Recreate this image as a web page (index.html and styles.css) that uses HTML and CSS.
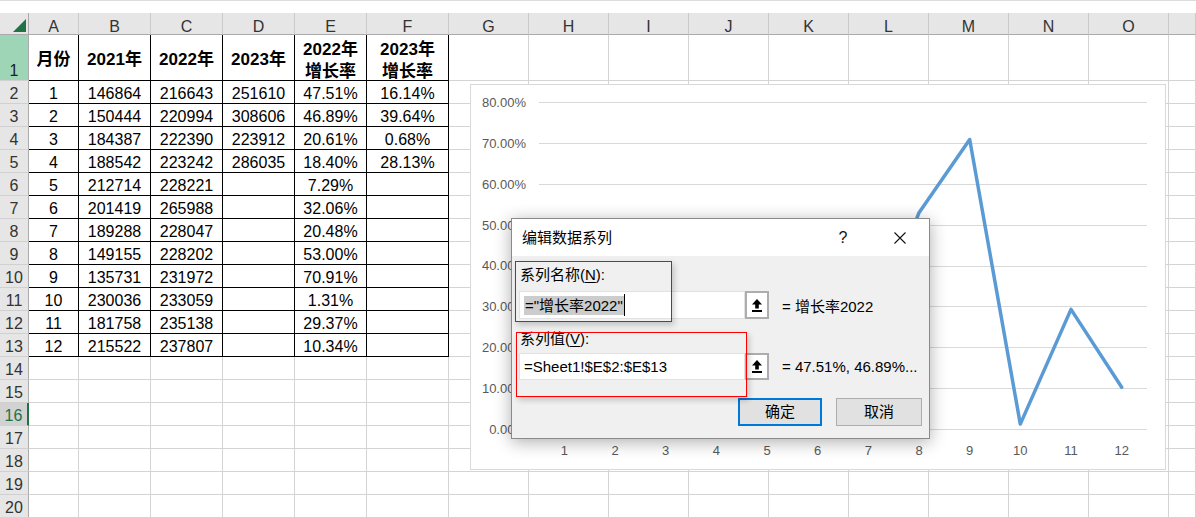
FILE: index.html
```html
<!DOCTYPE html>
<html lang="zh-CN">
<head>
<meta charset="utf-8">
<title>Excel - 编辑数据系列</title>
<link rel="stylesheet" href="styles.css">
</head>
<body>
<div class="page">
  <div class="topbar"></div>
  <div class="grid">
    <div class="corner"><svg width="28" height="21" viewBox="0 0 28 21"><polygon points="26,6 26,19 13,19" fill="#217346"/></svg></div>
    <div class="ch">A</div><div class="ch">B</div><div class="ch">C</div><div class="ch">D</div><div class="ch">E</div><div class="ch">F</div><div class="ch">G</div><div class="ch">H</div><div class="ch">I</div><div class="ch">J</div><div class="ch">K</div><div class="ch">L</div><div class="ch">M</div><div class="ch">N</div><div class="ch">O</div><div class="ch"></div>

    <div class="rh sel">1</div><div class="c b h">月份</div><div class="c b h">2021年</div><div class="c b h">2022年</div><div class="c b h">2023年</div><div class="c b h h2">2022年<br>增长率</div><div class="c b h h2">2023年<br>增长率</div><div class="c"></div><div class="c"></div><div class="c"></div><div class="c"></div><div class="c"></div><div class="c"></div><div class="c"></div><div class="c"></div><div class="c"></div><div class="c"></div>

    <div class="rh">2</div><div class="c b">1</div><div class="c b">146864</div><div class="c b">216643</div><div class="c b">251610</div><div class="c b">47.51%</div><div class="c b">16.14%</div><div class="c"></div><div class="c"></div><div class="c"></div><div class="c"></div><div class="c"></div><div class="c"></div><div class="c"></div><div class="c"></div><div class="c"></div><div class="c"></div>

    <div class="rh">3</div><div class="c b">2</div><div class="c b">150444</div><div class="c b">220994</div><div class="c b">308606</div><div class="c b">46.89%</div><div class="c b">39.64%</div><div class="c"></div><div class="c"></div><div class="c"></div><div class="c"></div><div class="c"></div><div class="c"></div><div class="c"></div><div class="c"></div><div class="c"></div><div class="c"></div>

    <div class="rh">4</div><div class="c b">3</div><div class="c b">184387</div><div class="c b">222390</div><div class="c b">223912</div><div class="c b">20.61%</div><div class="c b">0.68%</div><div class="c"></div><div class="c"></div><div class="c"></div><div class="c"></div><div class="c"></div><div class="c"></div><div class="c"></div><div class="c"></div><div class="c"></div><div class="c"></div>

    <div class="rh">5</div><div class="c b">4</div><div class="c b">188542</div><div class="c b">223242</div><div class="c b">286035</div><div class="c b">18.40%</div><div class="c b">28.13%</div><div class="c"></div><div class="c"></div><div class="c"></div><div class="c"></div><div class="c"></div><div class="c"></div><div class="c"></div><div class="c"></div><div class="c"></div><div class="c"></div>

    <div class="rh">6</div><div class="c b">5</div><div class="c b">212714</div><div class="c b">228221</div><div class="c b"></div><div class="c b">7.29%</div><div class="c b"></div><div class="c"></div><div class="c"></div><div class="c"></div><div class="c"></div><div class="c"></div><div class="c"></div><div class="c"></div><div class="c"></div><div class="c"></div><div class="c"></div>

    <div class="rh">7</div><div class="c b">6</div><div class="c b">201419</div><div class="c b">265988</div><div class="c b"></div><div class="c b">32.06%</div><div class="c b"></div><div class="c"></div><div class="c"></div><div class="c"></div><div class="c"></div><div class="c"></div><div class="c"></div><div class="c"></div><div class="c"></div><div class="c"></div><div class="c"></div>

    <div class="rh">8</div><div class="c b">7</div><div class="c b">189288</div><div class="c b">228047</div><div class="c b"></div><div class="c b">20.48%</div><div class="c b"></div><div class="c"></div><div class="c"></div><div class="c"></div><div class="c"></div><div class="c"></div><div class="c"></div><div class="c"></div><div class="c"></div><div class="c"></div><div class="c"></div>

    <div class="rh">9</div><div class="c b">8</div><div class="c b">149155</div><div class="c b">228202</div><div class="c b"></div><div class="c b">53.00%</div><div class="c b"></div><div class="c"></div><div class="c"></div><div class="c"></div><div class="c"></div><div class="c"></div><div class="c"></div><div class="c"></div><div class="c"></div><div class="c"></div><div class="c"></div>

    <div class="rh">10</div><div class="c b">9</div><div class="c b">135731</div><div class="c b">231972</div><div class="c b"></div><div class="c b">70.91%</div><div class="c b"></div><div class="c"></div><div class="c"></div><div class="c"></div><div class="c"></div><div class="c"></div><div class="c"></div><div class="c"></div><div class="c"></div><div class="c"></div><div class="c"></div>

    <div class="rh">11</div><div class="c b">10</div><div class="c b">230036</div><div class="c b">233059</div><div class="c b"></div><div class="c b">1.31%</div><div class="c b"></div><div class="c"></div><div class="c"></div><div class="c"></div><div class="c"></div><div class="c"></div><div class="c"></div><div class="c"></div><div class="c"></div><div class="c"></div><div class="c"></div>

    <div class="rh">12</div><div class="c b">11</div><div class="c b">181758</div><div class="c b">235138</div><div class="c b"></div><div class="c b">29.37%</div><div class="c b"></div><div class="c"></div><div class="c"></div><div class="c"></div><div class="c"></div><div class="c"></div><div class="c"></div><div class="c"></div><div class="c"></div><div class="c"></div><div class="c"></div>

    <div class="rh">13</div><div class="c b">12</div><div class="c b">215522</div><div class="c b">237807</div><div class="c b"></div><div class="c b">10.34%</div><div class="c b"></div><div class="c"></div><div class="c"></div><div class="c"></div><div class="c"></div><div class="c"></div><div class="c"></div><div class="c"></div><div class="c"></div><div class="c"></div><div class="c"></div>

    <div class="rh">14</div><div class="c"></div><div class="c"></div><div class="c"></div><div class="c"></div><div class="c"></div><div class="c"></div><div class="c"></div><div class="c"></div><div class="c"></div><div class="c"></div><div class="c"></div><div class="c"></div><div class="c"></div><div class="c"></div><div class="c"></div><div class="c"></div>

    <div class="rh">15</div><div class="c"></div><div class="c"></div><div class="c"></div><div class="c"></div><div class="c"></div><div class="c"></div><div class="c"></div><div class="c"></div><div class="c"></div><div class="c"></div><div class="c"></div><div class="c"></div><div class="c"></div><div class="c"></div><div class="c"></div><div class="c"></div>

    <div class="rh act">16</div><div class="c"></div><div class="c"></div><div class="c"></div><div class="c"></div><div class="c"></div><div class="c"></div><div class="c"></div><div class="c"></div><div class="c"></div><div class="c"></div><div class="c"></div><div class="c"></div><div class="c"></div><div class="c"></div><div class="c"></div><div class="c"></div>

    <div class="rh">17</div><div class="c"></div><div class="c"></div><div class="c"></div><div class="c"></div><div class="c"></div><div class="c"></div><div class="c"></div><div class="c"></div><div class="c"></div><div class="c"></div><div class="c"></div><div class="c"></div><div class="c"></div><div class="c"></div><div class="c"></div><div class="c"></div>

    <div class="rh">18</div><div class="c"></div><div class="c"></div><div class="c"></div><div class="c"></div><div class="c"></div><div class="c"></div><div class="c"></div><div class="c"></div><div class="c"></div><div class="c"></div><div class="c"></div><div class="c"></div><div class="c"></div><div class="c"></div><div class="c"></div><div class="c"></div>

    <div class="rh">19</div><div class="c"></div><div class="c"></div><div class="c"></div><div class="c"></div><div class="c"></div><div class="c"></div><div class="c"></div><div class="c"></div><div class="c"></div><div class="c"></div><div class="c"></div><div class="c"></div><div class="c"></div><div class="c"></div><div class="c"></div><div class="c"></div>

    <div class="rh">20</div><div class="c"></div><div class="c"></div><div class="c"></div><div class="c"></div><div class="c"></div><div class="c"></div><div class="c"></div><div class="c"></div><div class="c"></div><div class="c"></div><div class="c"></div><div class="c"></div><div class="c"></div><div class="c"></div><div class="c"></div><div class="c"></div>
  </div>

  <div class="chart">
    <svg class="chart-svg" width="694" height="384" viewBox="0 0 694 384">
      <g class="gridlines">
        <line x1="68" y1="17.5" x2="676" y2="17.5"/>
        <line x1="68" y1="58.5" x2="676" y2="58.5"/>
        <line x1="68" y1="99.5" x2="676" y2="99.5"/>
        <line x1="68" y1="140.5" x2="676" y2="140.5"/>
        <line x1="68" y1="181.5" x2="676" y2="181.5"/>
        <line x1="68" y1="221.5" x2="676" y2="221.5"/>
        <line x1="68" y1="262.5" x2="676" y2="262.5"/>
        <line x1="68" y1="303.5" x2="676" y2="303.5"/>
        <line x1="68" y1="344.5" x2="676" y2="344.5"/>
      </g>
      <g class="ylab">
        <text x="55" y="21.8">80.00%</text>
        <text x="55" y="62.7">70.00%</text>
        <text x="55" y="103.6">60.00%</text>
        <text x="55" y="144.5">50.00%</text>
        <text x="55" y="185.4">40.00%</text>
        <text x="55" y="226.3">30.00%</text>
        <text x="55" y="267.2">20.00%</text>
        <text x="55" y="308.1">10.00%</text>
        <text x="55" y="349.0">0.00%</text>
      </g>
      <g class="xlab">
        <text x="93.3" y="370">1</text>
        <text x="144.0" y="370">2</text>
        <text x="194.7" y="370">3</text>
        <text x="245.3" y="370">4</text>
        <text x="296.0" y="370">5</text>
        <text x="346.7" y="370">6</text>
        <text x="397.3" y="370">7</text>
        <text x="448.0" y="370">8</text>
        <text x="498.7" y="370">9</text>
        <text x="549.3" y="370">10</text>
        <text x="600.0" y="370">11</text>
        <text x="650.7" y="370">12</text>
      </g>
      <polyline class="series" points="93.3,150.2 144.0,152.7 194.7,260.2 245.3,269.2 296.0,314.7 346.7,213.4 397.3,260.7 448.0,127.7 498.7,54.5 549.3,339.1 600.0,224.4 650.7,302.2"/>
    </svg>
  </div>

  <div class="dialog">
    <div class="dlg-title">
      <span class="dlg-name">编辑数据系列</span>
      <span class="dlg-help">?</span>
      <span class="dlg-close"><svg width="12" height="12" viewBox="0 0 12 12"><path d="M0.5 0.5 L11.5 11.5 M11.5 0.5 L0.5 11.5" stroke="#111" stroke-width="1.1" fill="none"/></svg></span>
    </div>
    <div class="dlg-body">
      <div class="dlg-label">系列名称(<u>N</u>):</div>
      <div class="dlg-row">
        <div class="dlg-input"><span class="dlg-sel">="增长率2022"</span><span class="dlg-caret"></span></div>
        <div class="dlg-pick"><svg width="10" height="13" viewBox="0 0 10 13"><polygon points="5,0 10,5.5 0,5.5" fill="#000"/><rect x="3.2" y="5" width="3.6" height="4.5" fill="#000"/><rect x="0" y="11" width="10" height="2" fill="#000"/></svg></div>
        <div class="dlg-value">= 增长率2022</div>
      </div>
      <div class="dlg-label l2">系列值(<u>V</u>):</div>
      <div class="dlg-row r2">
        <div class="dlg-input">=Sheet1!$E$2:$E$13</div>
        <div class="dlg-pick"><svg width="10" height="13" viewBox="0 0 10 13"><polygon points="5,0 10,5.5 0,5.5" fill="#000"/><rect x="3.2" y="5" width="3.6" height="4.5" fill="#000"/><rect x="0" y="11" width="10" height="2" fill="#000"/></svg></div>
        <div class="dlg-value">= 47.51%, 46.89%...</div>
      </div>
      <div class="dlg-buttons">
        <div class="btn primary">确定</div>
        <div class="btn">取消</div>
      </div>
    </div>
    <div class="mark m1"></div>
    <div class="mark m2"></div>
  </div>
</div>
</body>
</html>
```
FILE: styles.css
```css
html, body {
  margin: 0;
  padding: 0;
  background: #fff;
}
body {
  font-family: "Liberation Sans", "Noto Sans CJK SC", sans-serif;
  color: #000;
}
.page {
  position: relative;
  width: 1196px;
  height: 517px;
  overflow: hidden;
}
.topbar {
  height: 13px;
  background: #fff;
  box-sizing: border-box;
  border-top: 1px solid #dcdcdc;
}
.grid {
  display: grid;
  grid-template-columns: 29px 50px 72px 72px 72px 72px 82px repeat(9, 80px) 27px;
  grid-template-rows: 22px 46px repeat(19, 23px);
}
.grid > div {
  box-sizing: border-box;
  display: flex;
  justify-content: center;
  align-items: flex-end;
  font-size: 16px;
  line-height: 18px;
  white-space: nowrap;
}
.corner {
  background: #e6e6e6;
  border-right: 1px solid #ababab;
  border-bottom: 1px solid #ababab;
}
.corner svg { display: block; }
.grid > .ch {
  background: #e6e6e6;
  border-right: 1px solid #cacaca;
  border-bottom: 1px solid #ababab;
  color: #333;
  line-height: 14px;
}
.rh {
  background: #e6e6e6;
  border-right: 1px solid #ababab;
  border-bottom: 1px solid #d0d0d0;
  color: #333;
}
.rh.sel {
  background: #9fd5b7;
  color: #222;
}
.rh.act {
  background: #d2d2d2;
  border-right: 2px solid #217346;
  color: #217346;
}
.c {
  border-right: 1px solid #d4d4d4;
  border-bottom: 1px solid #d4d4d4;
  background: #fff;
}
.c.b {
  border-right-color: #000;
  border-bottom-color: #000;
}
.grid > .h {
  font-weight: bold;
  font-size: 17px;
  line-height: 22px;
  align-items: center;
  text-align: center;
  padding-top: 4px;
}
.grid > .h2 {
  line-height: 22.5px;
  padding-top: 7px;
}

/* chart */
.chart {
  position: absolute;
  left: 470px;
  top: 84px;
  width: 696px;
  height: 386px;
  box-sizing: border-box;
  border: 1px solid #d9d9d9;
  background: #fff;
}
.chart-svg { display: block; }
.gridlines line {
  stroke: #d9d9d9;
  stroke-width: 1;
}
.ylab text {
  font-family: "Liberation Sans", sans-serif;
  font-size: 13px;
  fill: #595959;
  text-anchor: end;
}
.xlab text {
  font-family: "Liberation Sans", sans-serif;
  font-size: 13px;
  fill: #595959;
  text-anchor: middle;
}
.series {
  fill: none;
  stroke: #5b9bd5;
  stroke-width: 3.5;
  stroke-linejoin: round;
  stroke-linecap: round;
}

/* dialog */
.dialog {
  position: absolute;
  left: 511px;
  top: 218px;
  width: 419px;
  height: 221px;
  box-sizing: border-box;
  border: 1px solid #8a8a8a;
  background: #f0f0f0;
  box-shadow: 0 3px 16px rgba(0, 0, 0, 0.32);
  display: flex;
  flex-direction: column;
  font-family: "Liberation Sans", "Noto Sans CJK SC", sans-serif;
  font-size: 15px;
}
.dlg-title {
  height: 37px;
  background: #fff;
  display: flex;
  align-items: center;
  padding-left: 10px;
}
.dlg-name {
  line-height: 20px;
  color: #000;
}
.dlg-help {
  margin-left: auto;
  width: 20px;
  text-align: center;
  font-size: 16px;
  color: #111;
}
.dlg-close {
  width: 24px;
  margin-left: 35px;
  margin-right: 17px;
  display: flex;
  justify-content: center;
}
.dlg-close svg { display: block; }
.dlg-body {
  flex: 1;
  padding: 9px 7px 0 7px;
  display: flex;
  flex-direction: column;
}
.dlg-label {
  height: 20px;
  line-height: 20px;
  padding-left: 1px;
}
.dlg-label u { text-underline-offset: 2px; }
.dlg-label.l2 { margin-top: 10px; }
.dlg-row {
  margin-top: 6px;
  height: 28px;
  display: flex;
  align-items: stretch;
}
.dlg-row.r2 {
  margin-top: 4px;
  height: 27px;
}
.dlg-input {
  width: 226px;
  box-sizing: border-box;
  background: #fff;
  border: 1px solid #e2e2e2;
  display: flex;
  align-items: center;
  padding-left: 4px;
  line-height: 20px;
  white-space: nowrap;
}
.dlg-sel {
  background: #cccccc;
  padding: 0 1px;
  line-height: 19px;
}
.dlg-caret {
  width: 1px;
  height: 22px;
  background: #000;
}
.dlg-pick {
  width: 24px;
  box-sizing: border-box;
  border: 2px solid #adadad;
  background: #fff;
  display: flex;
  align-items: center;
  justify-content: center;
}
.dlg-pick svg { display: block; }
.dlg-value {
  margin-left: 13px;
  display: flex;
  align-items: center;
  white-space: nowrap;
}
.dlg-buttons {
  margin-top: 18px;
  display: flex;
  justify-content: flex-end;
  gap: 14px;
}
.btn {
  width: 86px;
  height: 28px;
  box-sizing: border-box;
  border: 1px solid #adadad;
  background: #e1e1e1;
  display: flex;
  align-items: center;
  justify-content: center;
  line-height: 20px;
}
.btn.primary {
  width: 84px;
  border: 2px solid #0078d7;
}
.mark {
  position: absolute;
  border: 1px solid #ff0000;
  box-shadow: 2px 3px 6px rgba(0, 0, 0, 0.2);
  pointer-events: none;
}
.m1 {
  left: 3px;
  top: 42px;
  width: 155px;
  height: 59px;
}
.m2 {
  left: 4px;
  top: 113px;
  width: 229px;
  height: 63px;
}
```
